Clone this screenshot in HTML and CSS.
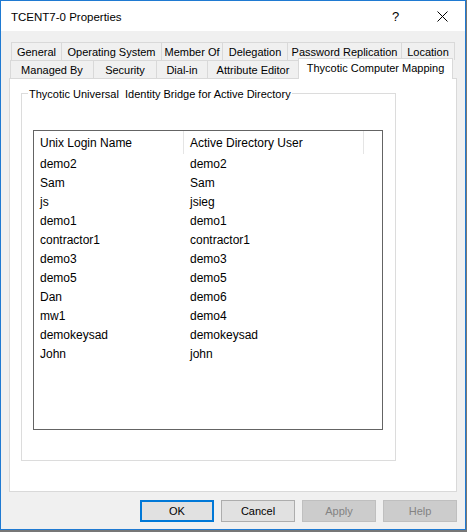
FILE: index.html
```html
<!DOCTYPE html>
<html>
<head>
<meta charset="utf-8">
<title>TCENT7-0 Properties</title>
<link rel="stylesheet" href="styles.css">
</head>
<body>
<div class="window">
  <div class="titlebar">
    <span class="title">TCENT7-0 Properties</span>
    <span class="cap-btn help">?</span>
    <span class="cap-btn close">
      <svg width="11" height="11" viewBox="0 0 11 11"><path d="M0.5 0.5 L10.5 10.5 M10.5 0.5 L0.5 10.5" stroke="#000" stroke-width="1" fill="none"/></svg>
    </span>
  </div>
  <div class="body">
    <div class="tabs">
      <div class="tab-row back">
        <div class="tab t-general">General</div>
        <div class="tab t-os">Operating System</div>
        <div class="tab t-member">Member Of</div>
        <div class="tab t-deleg">Delegation</div>
        <div class="tab t-pwd">Password Replication</div>
        <div class="tab t-loc">Location</div>
      </div>
      <div class="tab-row front">
        <div class="tab t-managed">Managed By</div>
        <div class="tab t-sec">Security</div>
        <div class="tab t-dial">Dial-in</div>
        <div class="tab t-attr">Attribute Editor</div>
        <div class="tab t-map active">Thycotic Computer Mapping</div>
      </div>
    </div>
    <div class="panel">
      <div class="group">
        <span class="group-label">Thycotic Universal&nbsp; Identity Bridge for Active Directory</span>
        <div class="listview">
          <div class="lv-header">
            <div class="hcol c1">Unix Login Name</div>
            <div class="hcol c2">Active Directory User</div>
            <div class="hcol c3"></div>
          </div>
          <div class="lv-row"><span class="cell c1">demo2</span><span class="cell c2">demo2</span></div>
          <div class="lv-row"><span class="cell c1">Sam</span><span class="cell c2">Sam</span></div>
          <div class="lv-row"><span class="cell c1">js</span><span class="cell c2">jsieg</span></div>
          <div class="lv-row"><span class="cell c1">demo1</span><span class="cell c2">demo1</span></div>
          <div class="lv-row"><span class="cell c1">contractor1</span><span class="cell c2">contractor1</span></div>
          <div class="lv-row"><span class="cell c1">demo3</span><span class="cell c2">demo3</span></div>
          <div class="lv-row"><span class="cell c1">demo5</span><span class="cell c2">demo5</span></div>
          <div class="lv-row"><span class="cell c1">Dan</span><span class="cell c2">demo6</span></div>
          <div class="lv-row"><span class="cell c1">mw1</span><span class="cell c2">demo4</span></div>
          <div class="lv-row"><span class="cell c1">demokeysad</span><span class="cell c2">demokeysad</span></div>
          <div class="lv-row"><span class="cell c1">John</span><span class="cell c2">john</span></div>
        </div>
      </div>
    </div>
    <div class="buttons">
      <button class="btn default">OK</button>
      <button class="btn">Cancel</button>
      <button class="btn disabled">Apply</button>
      <button class="btn disabled">Help</button>
    </div>
  </div>
</div>
</body>
</html>
```
FILE: styles.css
```css
* { box-sizing: border-box; }
html, body {
  margin: 0;
  padding: 0;
}
body {
  width: 467px;
  height: 532px;
  background: #777777;
  font-family: "Liberation Sans", Arial, sans-serif;
  font-size: 12px;
  color: #000;
  overflow: hidden;
}
.window {
  width: 466px;
  height: 530px;
  border: 1px solid #1f7ad2;
  background: #f0f0f0;
  display: flex;
  flex-direction: column;
}
.titlebar {
  height: 30px;
  background: #ffffff;
  display: flex;
  align-items: center;
  padding-left: 10px;
  flex-shrink: 0;
}
.title {
  font-size: 11.5px;
  flex: 1;
  padding-top: 1px;
}
.cap-btn {
  width: 46px;
  height: 30px;
  display: flex;
  align-items: center;
  justify-content: center;
}
.cap-btn.help {
  font-size: 13px;
  padding-right: 1px;
}
.body {
  flex: 1;
  padding: 11px 8px 0 8px;
  display: flex;
  flex-direction: column;
}
.tabs {
  display: flex;
  flex-direction: column;
  font-size: 11px;
}
.tab-row {
  display: flex;
  align-items: flex-start;
  height: 18px;
}
.tab-row.back { margin-left: 2px; }
.tab-row.front { margin-left: 1px; }
.tab {
  height: 18px;
  border: 1px solid #d9d9d9;
  border-bottom: none;
  margin-right: -1px;
  background: #f0f0f0;
  text-align: center;
  line-height: 18px;
  white-space: nowrap;
}
.tab.active {
  position: relative;
  z-index: 1;
  height: 21px;
  margin-top: -2px;
  margin-bottom: -1px;
  background: #ffffff;
}
.t-general { width: 51px; }
.t-os { width: 101px; }
.t-member { width: 62px; }
.t-deleg { width: 66px; }
.t-pwd { width: 115px; }
.t-loc { width: 54px; }
.t-managed { width: 84px; }
.t-sec { width: 64px; }
.t-dial { width: 52px; }
.t-attr { width: 92px; }
.t-map { width: 155px; }

.panel {
  width: 448px;
  height: 414px;
  border: 1px solid #d9d9d9;
  background: #ffffff;
  padding: 0;
}
.group {
  position: relative;
  width: 375px;
  height: 368px;
  margin: 14px 0 0 11px;
  border: 1px solid #dcdcdc;
}
.group-label {
  position: absolute;
  top: -8px;
  left: 6px;
  padding: 0 1px;
  background: #ffffff;
  font-size: 11px;
  line-height: 16px;
  white-space: nowrap;
}
.listview {
  width: 350px;
  height: 300px;
  margin: 36px 0 0 11px;
  border: 1px solid #646464;
  background: #ffffff;
}
.lv-header {
  display: flex;
  height: 23px;
}
.hcol {
  height: 23px;
  line-height: 24px;
  padding-left: 6px;
  white-space: nowrap;
}
.hcol.c1 { width: 150px; border-right: 1px solid #e5e5e5; }
.hcol.c2 { width: 180px; border-right: 1px solid #e5e5e5; }
.hcol.c3 { flex: 1; }
.lv-row {
  display: flex;
  height: 19px;
  line-height: 20px;
}
.cell {
  padding-left: 6px;
  white-space: nowrap;
}
.cell.c1 { width: 150px; }
.cell.c2 { flex: 1; }

.buttons {
  display: flex;
  justify-content: flex-end;
  gap: 7px;
  margin-top: 8px;
}
.btn {
  width: 74px;
  height: 22px;
  padding: 0;
  margin: 0;
  font-family: "Liberation Sans", Arial, sans-serif;
  font-size: 11px;
  color: #000;
  background: #e1e1e1;
  border: 1px solid #adadad;
  border-radius: 0;
}
.btn.default {
  border: 2px solid #0078d7;
}
.btn.disabled {
  background: #cccccc;
  border-color: #bfbfbf;
  color: #838383;
}
```
